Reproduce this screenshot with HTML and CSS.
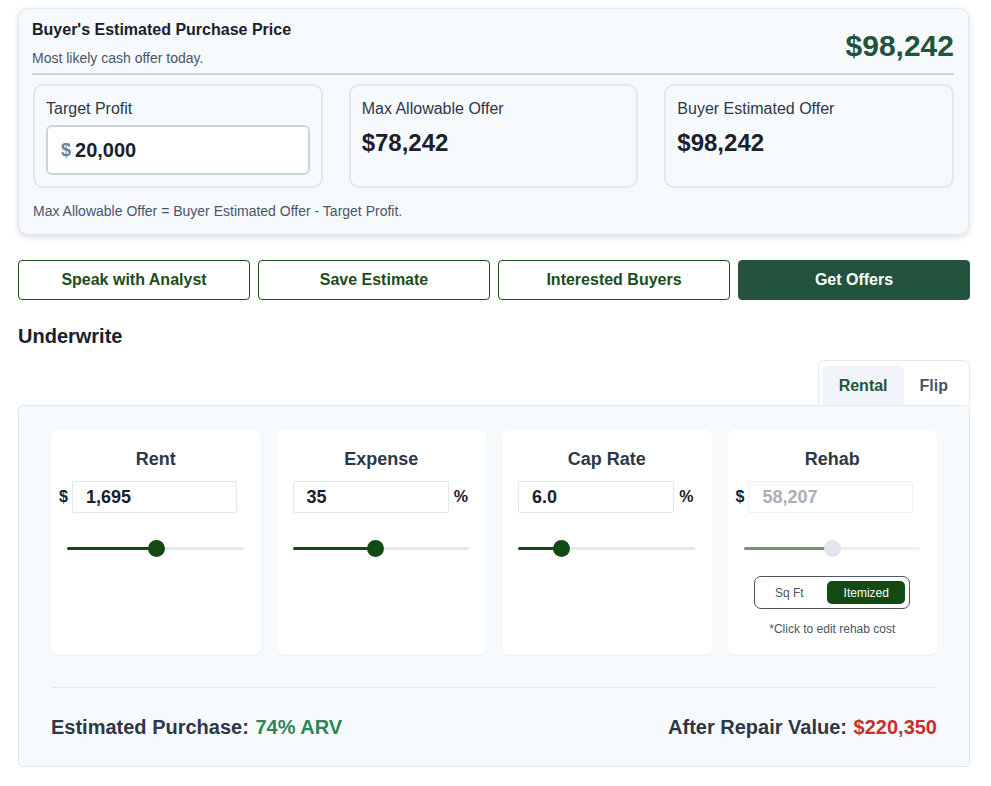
FILE: index.html
```html
<!DOCTYPE html>
<html>
<head>
<meta charset="utf-8">
<link rel="stylesheet" href="styles.css">
</head>
<body>
<div class="page">
  <section class="summary">
    <div class="summary-head">
      <div>
        <div class="summary-title">Buyer's Estimated Purchase Price</div>
        <div class="summary-sub">Most likely cash offer today.</div>
      </div>
      <div class="summary-price">$98,242</div>
    </div>
    <div class="summary-divider"></div>
    <div class="summary-cards">
      <div class="s-card">
        <div class="s-label">Target Profit</div>
        <div class="s-input"><span class="s-cur">$</span><span class="s-num">20,000</span></div>
      </div>
      <div class="s-card">
        <div class="s-label">Max Allowable Offer</div>
        <div class="s-value">$78,242</div>
      </div>
      <div class="s-card">
        <div class="s-label">Buyer Estimated Offer</div>
        <div class="s-value">$98,242</div>
      </div>
    </div>
    <div class="summary-note">Max Allowable Offer = Buyer Estimated Offer - Target Profit.</div>
  </section>

  <div class="actions">
    <button class="btn">Speak with Analyst</button>
    <button class="btn">Save Estimate</button>
    <button class="btn">Interested Buyers</button>
    <button class="btn btn-primary">Get Offers</button>
  </div>

  <h2 class="section-title">Underwrite</h2>

  <div class="tabs-row">
    <div class="tabs">
      <div class="tab tab-active">Rental</div>
      <div class="tab">Flip</div>
    </div>
  </div>

  <section class="panel">
    <div class="metrics">
      <div class="m-card">
        <div class="m-title">Rent</div>
        <div class="m-row m-row-pre">
          <span class="m-affix">$</span>
          <div class="m-input">1,695</div>
        </div>
        <div class="slider">
          <div class="slider-fill" style="width:50.6%"></div>
          <div class="slider-thumb" style="left:46%"></div>
        </div>
      </div>
      <div class="m-card">
        <div class="m-title">Expense</div>
        <div class="m-row m-row-suf">
          <div class="m-input">35</div>
          <span class="m-affix">%</span>
        </div>
        <div class="slider">
          <div class="slider-fill" style="width:46.6%"></div>
          <div class="slider-thumb" style="left:42.4%"></div>
        </div>
      </div>
      <div class="m-card">
        <div class="m-title">Cap Rate</div>
        <div class="m-row m-row-suf">
          <div class="m-input">6.0</div>
          <span class="m-affix">%</span>
        </div>
        <div class="slider">
          <div class="slider-fill" style="width:24.8%"></div>
          <div class="slider-thumb" style="left:20%"></div>
        </div>
      </div>
      <div class="m-card">
        <div class="m-title">Rehab</div>
        <div class="m-row m-row-pre">
          <span class="m-affix">$</span>
          <div class="m-input m-input-disabled">58,207</div>
        </div>
        <div class="slider slider-muted">
          <div class="slider-fill" style="width:50%"></div>
          <div class="slider-thumb" style="left:45.5%"></div>
        </div>
        <div class="toggle">
          <div class="toggle-opt toggle-off">Sq Ft</div>
          <div class="toggle-opt toggle-on">Itemized</div>
        </div>
        <div class="m-note">*Click to edit rehab cost</div>
      </div>
    </div>
    <div class="panel-divider"></div>
    <div class="totals">
      <div class="total">Estimated Purchase: <span class="green">74% ARV</span></div>
      <div class="total">After Repair Value: <span class="red">$220,350</span></div>
    </div>
  </section>
</div>
</body>
</html>
```

FILE: styles.css
```css
* { box-sizing: border-box; }
html, body { margin: 0; padding: 0; background: #ffffff; }
body {
  font-family: "Liberation Sans", Arial, sans-serif;
  color: #1a202c;
}
.page {
  padding: 8px 21px 20px 18px;
}

/* Summary card */
.summary {
  background: #f7fafc;
  border: 1px solid #e2e8f0;
  border-radius: 10px;
  box-shadow: 0 2px 6px rgba(0, 0, 0, 0.14);
  padding: 11px 14px 15px 13px;
  width: 951px;
}
.summary-head {
  display: flex;
  justify-content: space-between;
  align-items: flex-start;
}
.summary-title {
  font-size: 16px;
  line-height: 20px;
  font-weight: 700;
  color: #1a202c;
}
.summary-sub {
  font-size: 14px;
  line-height: 16px;
  margin-top: 10px;
  color: #4a5568;
}
.summary-price {
  font-size: 30px;
  line-height: 36px;
  font-weight: 700;
  color: #22543d;
  padding-top: 8px;
}
.summary-divider {
  height: 2px;
  background: #cbd5e0;
  margin-top: 7px;
}
.summary-cards {
  display: grid;
  grid-template-columns: repeat(3, 1fr);
  gap: 26px;
  margin-top: 9px;
  padding-left: 1px;
}
.s-card {
  border: 2px solid #e2e8f0;
  border-radius: 10px;
  padding: 13px 11px 11px 11px;
  height: 104px;
}
.s-label {
  font-size: 16px;
  line-height: 20px;
  color: #2d3748;
}
.s-input {
  margin-top: 6px;
  height: 50px;
  border: 2px solid #cbd5e0;
  border-radius: 6px;
  background: #ffffff;
  display: flex;
  align-items: center;
  padding-left: 13px;
  gap: 4px;
}
.s-cur {
  font-size: 18px;
  font-weight: 700;
  color: #718096;
}
.s-num {
  font-size: 20px;
  font-weight: 700;
  color: #1a202c;
}
.s-value {
  margin-top: 10px;
  font-size: 24px;
  line-height: 28px;
  font-weight: 700;
  color: #1a202c;
}
.summary-note {
  margin-top: 15px;
  font-size: 14px;
  line-height: 16px;
  color: #4a5568;
  padding-left: 1px;
}

/* Action buttons */
.actions {
  display: grid;
  grid-template-columns: repeat(4, 1fr);
  gap: 8px;
  margin-top: 25px;
}
.btn {
  height: 40px;
  border: 1px solid #1c4d1c;
  border-radius: 4px;
  background: #ffffff;
  color: #1c4d1c;
  font-family: "Liberation Sans", Arial, sans-serif;
  font-size: 16px;
  font-weight: 700;
  cursor: pointer;
}
.btn-primary {
  background: #23533c;
  border-color: #23533c;
  color: #ffffff;
}

.section-title {
  margin: 24px 0 0 0;
  font-size: 20px;
  line-height: 24px;
  font-weight: 700;
  color: #1a202c;
}

/* Tabs */
.tabs-row {
  display: flex;
  justify-content: flex-end;
  margin-top: 12px;
}
.tabs {
  display: flex;
  border: 1px solid #e2e8f0;
  border-bottom: none;
  border-radius: 6px 6px 0 0;
  padding: 5px 5px 0 4px;
  height: 45px;
}
.tab {
  display: flex;
  align-items: center;
  padding: 0 16px;
  height: 39px;
  font-size: 16px;
  font-weight: 700;
  color: #4a5568;
  border-radius: 6px 6px 0 0;
}
.tab-active {
  background: #f1f5f9;
  color: #22543d;
}

/* Panel */
.panel {
  background: #f7fafc;
  border: 1px solid #e2e8f0;
  border-radius: 4px;
  padding: 24px 32px 27px 32px;
}
.metrics {
  display: grid;
  grid-template-columns: repeat(4, 1fr);
  gap: 16px;
}
.m-card {
  background: #ffffff;
  border-radius: 7px;
  box-shadow: 0 1px 2px rgba(0, 0, 0, 0.06);
  padding: 18px 0 18px 0;
  display: flex;
  flex-direction: column;
  align-items: stretch;
}
.m-title {
  text-align: center;
  font-size: 18px;
  line-height: 22px;
  font-weight: 700;
  color: #2d3748;
}
.m-row {
  display: flex;
  align-items: center;
  margin-top: 11px;
  gap: 4px;
}
.m-row-pre { padding: 0 24px 0 8px; }
.m-row-suf { padding: 0 18px 0 16px; }
.m-affix {
  font-size: 16px;
  font-weight: 700;
  color: #1a202c;
}
.m-row-suf .m-affix { margin-left: 1px; }
.m-input {
  flex: 1;
  height: 32px;
  border: 1px solid #e2e8f0;
  border-radius: 2px;
  display: flex;
  align-items: center;
  padding-left: 13px;
  font-size: 18px;
  font-weight: 700;
  color: #1a202c;
}
.m-input-disabled {
  color: #a9afb8;
  border-color: #edf0f4;
}
.slider {
  position: relative;
  height: 3px;
  margin: 34px 17px 0 16px;
  background: #e2e8f0;
  border-radius: 2px;
}
.slider-fill {
  height: 3px;
  background: #134a13;
  border-radius: 2px;
}
.slider-thumb {
  position: absolute;
  top: -7px;
  width: 17px;
  height: 17px;
  border-radius: 50%;
  background: #134a13;
}
.slider-muted { background: #edf0f4; }
.slider-muted .slider-fill { background: #6e9670; }
.slider-muted .slider-thumb { background: #e2e6ec; }
.toggle {
  align-self: center;
  margin-top: 26px;
  width: 156px;
  height: 33px;
  border: 1px solid #4a5568;
  border-radius: 7px;
  padding: 4px;
  display: flex;
}
.toggle-opt {
  display: flex;
  align-items: center;
  justify-content: center;
  font-size: 12px;
  color: #4a5568;
}
.toggle-off {
  flex: 1;
  padding-right: 8px;
}
.toggle-on {
  flex: 0 0 78px;
  background: #134a13;
  color: #ffffff;
  border-radius: 5px;
}
.m-note {
  margin-top: 12px;
  text-align: center;
  font-size: 12px;
  line-height: 16px;
  color: #4a5568;
}
.panel-divider {
  height: 1px;
  background: #e2e8f0;
  margin-top: 32px;
}
.totals {
  display: flex;
  justify-content: space-between;
  margin-top: 27px;
}
.total {
  font-size: 20px;
  line-height: 24px;
  font-weight: 700;
  color: #2d3748;
}
.total span { margin-left: 1px; }
.green { color: #2f855a; }
.red { color: #c53030; }
```
